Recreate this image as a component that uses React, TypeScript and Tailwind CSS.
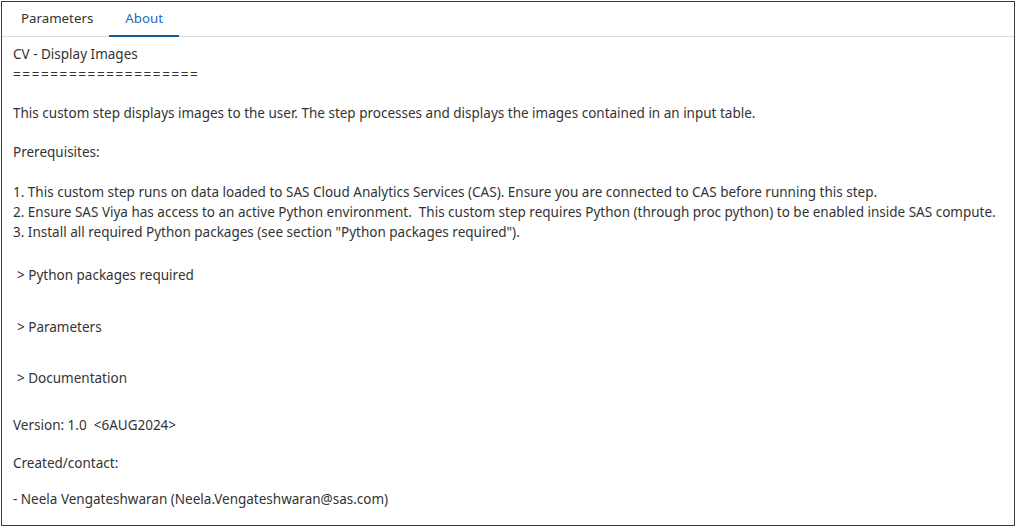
import { useState } from 'react'

const tabs = ['Parameters', 'About']

export default function App() {
  const [active, setActive] = useState('About')

  return (
    <div className="p-px bg-white" style={{ fontFamily: '"Noto Sans", "Open Sans", sans-serif' }}>
      <div className="h-[525px] border border-[#3a3a3a] bg-white text-[13.5px] text-[#333]">
        {/* tab strip */}
        <div className="flex h-[35px] border-b border-[#dcdcdc] pl-[3px] pb-px">
          {tabs.map((t) => (
            <button
              key={t}
              onClick={() => setActive(t)}
              className={`relative px-[16px] text-[13.3px] leading-none ${
                active === t ? 'text-[#1a6bbf]' : 'text-[#333]'
              }`}
            >
              {t}
              {active === t && (
                <span className="absolute left-0 right-0 bottom-[-2px] h-[2px] bg-[#14609f]" />
              )}
            </button>
          ))}
        </div>

        {/* about body */}
        <div className="px-[11px] pt-[7px] leading-[20px]">
          <p>CV - Display Images</p>
          <p className="tracking-[1.6px]">====================</p>
          <p className="mt-[19px]">
            This custom step displays images to the user. The step processes and displays the images contained in an input table.
          </p>
          <p className="mt-[19px]">Prerequisites:</p>
          <div className="mt-[20px]">
            <p>1. This custom step runs on data loaded to SAS Cloud Analytics Services (CAS). Ensure you are connected to CAS before running this step.</p>
            <p>2. Ensure SAS Viya has access to an active Python environment.&nbsp; This custom step requires Python (through proc python) to be enabled inside SAS compute.</p>
            <p>3. Install all required Python packages (see section "Python packages required").</p>
          </div>
          <p className="mt-[23px] pl-[4px]">&gt; Python packages required</p>
          <p className="mt-[32px] pl-[4px]">&gt; Parameters</p>
          <p className="mt-[31px] pl-[4px]">&gt; Documentation</p>
          <p className="mt-[27px]">Version: 1.0&nbsp; &lt;6AUG2024&gt;</p>
          <p className="mt-[18px]">Created/contact:</p>
          <p className="mt-[16px]">- Neela Vengateshwaran (Neela.Vengateshwaran@sas.com)</p>
        </div>
      </div>
    </div>
  )
}
